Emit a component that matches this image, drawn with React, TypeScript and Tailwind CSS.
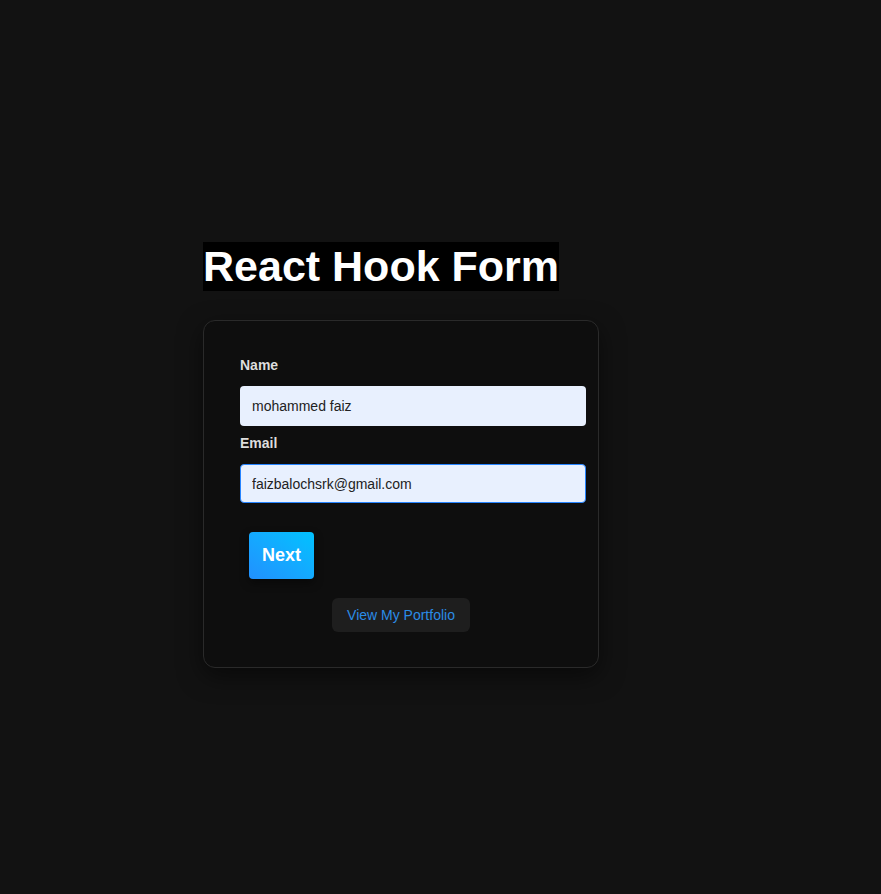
import { useState } from 'react';

export default function App() {
  const [name, setName] = useState('mohammed faiz');
  const [email, setEmail] = useState('faizbalochsrk@gmail.com');

  return (
    <div className="min-h-[894px] bg-[#121212] pt-[242px] font-['Liberation_Sans',Arial,sans-serif]">
      <div className="ml-[203px] w-[396px]">
        <h1 className="inline-block bg-black text-[43px] font-bold leading-[49px] text-white">
          React Hook Form
        </h1>

        <form
          className="mt-[29px] h-[348px] rounded-xl border border-[#2a2a2a] bg-[#0e0e0e] pl-9 pr-3 pt-9 shadow-[0_8px_24px_rgba(0,0,0,0.5)]"
          onSubmit={(e) => e.preventDefault()}
        >
          <label className="block text-sm font-bold leading-4 text-[#dddddd]">Name</label>
          <input
            value={name}
            onChange={(e) => setName(e.target.value)}
            className="mt-[13px] block h-10 w-[346px] rounded-[4px] bg-[#e8f0fe] px-3 text-sm text-[#222] outline-none"
          />

          <label className="mt-[9px] block text-sm font-bold leading-4 text-[#dddddd]">Email</label>
          <input
            value={email}
            onChange={(e) => setEmail(e.target.value)}
            className="mt-[13px] block h-[39px] w-[346px] rounded-[4px] border border-[#2684ff] bg-[#e8f0fe] px-[11px] text-sm text-[#222] outline-none"
          />

          <button
            type="submit"
            className="ml-[9px] mt-[29px] block h-[47px] w-[65px] rounded-[4px] bg-linear-to-tr from-[#2190ff] to-[#00c2ff] text-[18px] font-bold text-white shadow-[0_4px_10px_rgba(0,0,0,0.45)]"
          >
            Next
          </button>

          <div className="mt-[19px] flex justify-center pr-6">
            <button
              type="button"
              className="h-[34px] w-[138px] rounded-md bg-[#1e1e1e] text-sm text-[#2b8ce6]"
            >
              View My Portfolio
            </button>
          </div>
        </form>
      </div>
    </div>
  );
}
